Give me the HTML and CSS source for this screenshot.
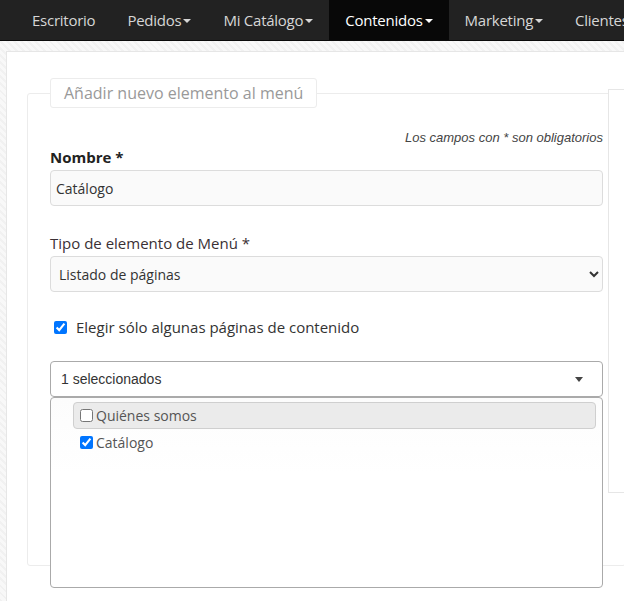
FILE: index.html
```html
<!DOCTYPE html>
<html lang="es">
<head>
<meta charset="utf-8">
<title>Añadir elemento al menú</title>
<link rel="stylesheet" href="styles.css">
</head>
<body>
<nav class="navbar">
  <ul class="nav">
    <li class="nav-item"><a class="nav-link">Escritorio</a></li>
    <li class="nav-item"><a class="nav-link">Pedidos<b class="caret"></b></a></li>
    <li class="nav-item"><a class="nav-link">Mi Catálogo<b class="caret"></b></a></li>
    <li class="nav-item active"><a class="nav-link">Contenidos<b class="caret"></b></a></li>
    <li class="nav-item"><a class="nav-link">Marketing<b class="caret"></b></a></li>
    <li class="nav-item"><a class="nav-link">Clientes<b class="caret"></b></a></li>
  </ul>
</nav>
<div class="page">
  <div class="panel">
    <fieldset class="form-box">
      <legend class="form-legend">Añadir nuevo elemento al menú</legend>
      <p class="note">Los campos con * son obligatorios</p>
      <label class="label label-bold">Nombre *</label>
      <input class="field" type="text" value="Catálogo">
      <label class="label label-gap">Tipo de elemento de Menú *</label>
      <select class="field field-select"><option>Listado de páginas</option></select>
      <label class="check-row"><input class="check" type="checkbox" checked><span>Elegir sólo algunas páginas de contenido</span></label>
      <div class="multiselect">
        <div class="ms-button"><span>1 seleccionados</span><b class="caret-dark"></b></div>
        <ul class="ms-dropdown">
          <li class="ms-item hover"><label class="ms-label"><input class="ms-check" type="checkbox"><span>Quiénes somos</span></label></li>
          <li class="ms-item"><label class="ms-label"><input class="ms-check" type="checkbox" checked><span>Catálogo</span></label></li>
        </ul>
      </div>
    </fieldset>
    <div class="side-box"></div>
  </div>
</div>
</body>
</html>
```
FILE: styles.css
```css
html, body {
  margin: 0;
  padding: 0;
  overflow: hidden;
  height: 100%;
}
body {
  font-family: "Open Sans", "DejaVu Sans", sans-serif;
  color: #333;
  background: repeating-linear-gradient(45deg, #f1f1f1 0 2px, #f8f8f8 2px 5px);
}
.navbar {
  background: #222;
  height: 40px;
  border-bottom: 1px solid #0a0a0a;
}
.nav {
  list-style: none;
  margin: 0;
  padding: 0 0 0 16px;
  display: flex;
  height: 40px;
  white-space: nowrap;
}
.nav-item {
  display: flex;
}
.nav-link {
  display: flex;
  align-items: center;
  padding: 0 16px;
  font-size: 15px;
  color: #d6d6d6;
  letter-spacing: -0.25px;
}
.nav-item.active .nav-link {
  background: #080808;
  color: #fff;
}
.caret {
  display: inline-block;
  width: 0;
  height: 0;
  margin-left: 2px;
  margin-top: 2px;
  border-top: 4px solid currentColor;
  border-left: 4px solid transparent;
  border-right: 4px solid transparent;
}
.page {
  padding: 10px 0 0 6px;
  height: 100%;
}
.panel {
  position: relative;
  background: #fff;
  border: 1px solid #e6e6e6;
  border-right: none;
  padding: 26px 0 0 20px;
  height: 100%;
  box-sizing: border-box;
}
.form-box {
  width: 553px;
  margin: 0;
  padding: 21px 22px 168px 22px;
  border: 1px solid #ececec;
  border-radius: 3px;
}
.form-legend {
  padding: 0 13px;
  height: 30px;
  line-height: 28px;
  box-sizing: border-box;
  border: 1px solid #ececec;
  border-radius: 3px;
  background: #fff;
  font-size: 16px;
  color: #999;
}
.note {
  margin: 0;
  text-align: right;
  font-family: "Liberation Sans", Arial, sans-serif;
  font-style: italic;
  font-size: 13px;
  line-height: 18px;
  color: #444;
}
.label {
  display: block;
  font-size: 15px;
  line-height: 20px;
  color: #3a3035;
  margin-bottom: 3px;
}
.label-bold {
  font-weight: bold;
  color: #222;
  margin-top: 0;
}
.label-gap {
  margin-top: 27px;
}
.field {
  display: block;
  width: 100%;
  height: 36px;
  box-sizing: border-box;
  margin: 0;
  background: #fafafa;
  border: 1px solid #dcdcdc;
  border-radius: 4px;
  font-family: "Open Sans", sans-serif;
  font-size: 14px;
  color: #333;
  padding: 0 5px;
}
.field-select {
  padding: 0 4px;
}
.check-row {
  display: flex;
  align-items: center;
  margin-top: 25px;
  height: 20px;
  font-size: 15px;
  color: #333;
}
.check {
  width: 13px;
  height: 13px;
  margin: 0 9px 0 4px;
}
.multiselect {
  position: relative;
  margin-top: 24px;
}
.ms-button {
  display: flex;
  align-items: center;
  justify-content: space-between;
  height: 36px;
  box-sizing: border-box;
  border: 1px solid #aaa;
  border-radius: 4px;
  padding: 0 19px 0 10px;
  font-family: "Liberation Sans", Arial, sans-serif;
  font-size: 14px;
  color: #333;
  background: #fff;
}
.caret-dark {
  width: 0;
  height: 0;
  border-top: 5px solid #444;
  border-left: 4px solid transparent;
  border-right: 4px solid transparent;
}
.ms-dropdown {
  position: absolute;
  left: 0;
  right: 0;
  top: 36px;
  height: 191px;
  box-sizing: border-box;
  margin: 0;
  padding: 4px 6px 0 22px;
  list-style: none;
  border: 1px solid #aaa;
  border-radius: 4px;
  background: linear-gradient(#fcfcfc, #fff 40%);
}
.ms-item {
  height: 27px;
  box-sizing: border-box;
  border: 1px solid transparent;
  border-radius: 4px;
}
.ms-item.hover {
  background: #ebebeb;
  border-color: #cfcfcf;
}
.ms-label {
  display: flex;
  align-items: center;
  height: 100%;
  padding-left: 6px;
  font-size: 14px;
  color: #555;
}
.ms-check {
  width: 13px;
  height: 13px;
  margin: 0 3px 0 0;
}
.side-box {
  position: absolute;
  left: 601px;
  top: 37px;
  width: 60px;
  height: 402px;
  background: #fff;
  border: 1px solid #e6e6e6;
  border-right: none;
}
```
